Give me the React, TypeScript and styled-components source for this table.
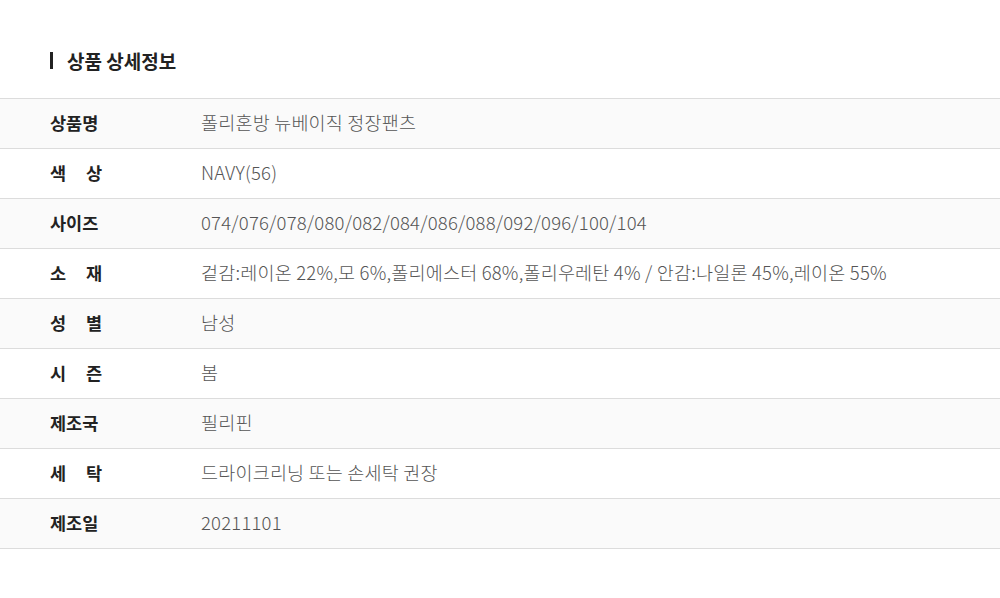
import React from "react";
import styled, { createGlobalStyle } from "styled-components";

const Global = createGlobalStyle`
  html, body { margin: 0; padding: 0; background: #fff; }
  body { font-family: "Noto Sans CJK KR", "Noto Sans", sans-serif; }
`;

const Page = styled.div`
  width: 1000px;
  height: 598px;
  background: #fff;
  padding-top: 46px;
  box-sizing: border-box;
`;

const Title = styled.h2`
  margin: 0 0 0 50px;
  height: 28px;
  display: flex;
  align-items: center;
  gap: 14px;
  font-size: 19px;
  font-weight: 700;
  color: #222;
  line-height: 1;
`;

const Bar = styled.span`
  display: block;
  width: 3px;
  height: 17px;
  background: #222;
`;

const Table = styled.div`
  margin-top: 24px;
  border-top: 1px solid #dcdcdc;
`;

const Row = styled.div<{ $shade: boolean }>`
  display: flex;
  align-items: center;
  height: 49px;
  box-sizing: border-box;
  padding: 0 0 3px 50px;
  border-bottom: 1px solid #dcdcdc;
  background: ${(p) => (p.$shade ? "#fafafa" : "#fff")};
  height: 50px;
`;

const Label = styled.div`
  width: 52px;
  margin-right: 99px;
  font-size: 17.5px;
  font-weight: 700;
  color: #222;
  text-align: justify;
  text-align-last: justify;
  white-space: nowrap;
`;

const Value = styled.div`
  font-size: 18.5px;
  font-weight: 300;
  color: #555;
  letter-spacing: 0.2px;
  white-space: nowrap;
`;

const rows: [string, string][] = [
  ["상품명", "폴리혼방 뉴베이직 정장팬츠"],
  ["색 상", "NAVY(56)"],
  ["사이즈", "074/076/078/080/082/084/086/088/092/096/100/104"],
  ["소 재", "겉감:레이온 22%,모 6%,폴리에스터 68%,폴리우레탄 4% / 안감:나일론 45%,레이온 55%"],
  ["성 별", "남성"],
  ["시 즌", "봄"],
  ["제조국", "필리핀"],
  ["세 탁", "드라이크리닝 또는 손세탁 권장"],
  ["제조일", "20211101"],
];

export default function App() {
  return (
    <>
      <Global />
      <Page>
        <Title>
          <Bar />
          상품 상세정보
        </Title>
        <Table>
          {rows.map(([k, v], i) => (
            <Row key={k} $shade={i % 2 === 0}>
              <Label>{k}</Label>
              <Value>{v}</Value>
            </Row>
          ))}
        </Table>
      </Page>
    </>
  );
}
